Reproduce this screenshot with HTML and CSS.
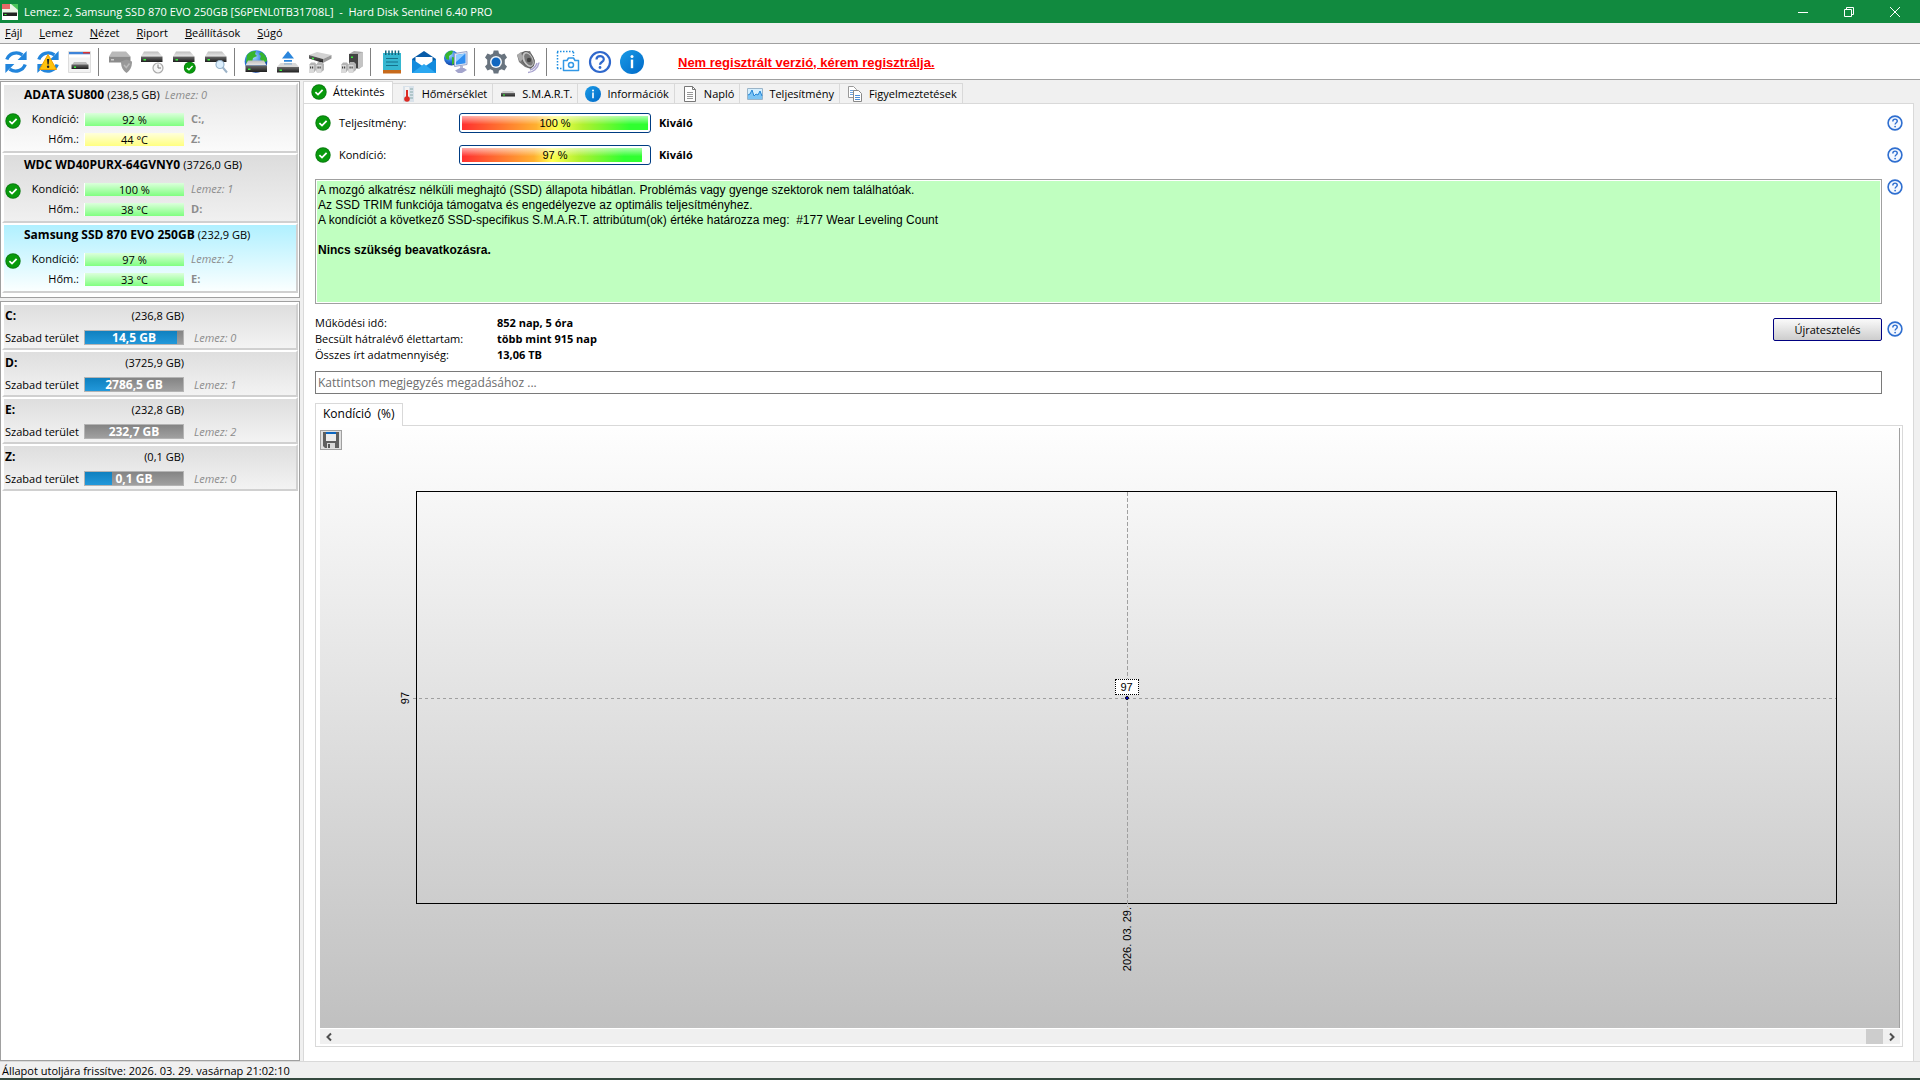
FILE: index.html
```html
<!DOCTYPE html>
<html lang="hu">
<head>
<meta charset="utf-8">
<title>Hard Disk Sentinel 6.40 PRO</title>
<link rel="stylesheet" href="styles.css">
</head>
<body>
<svg class="defs" aria-hidden="true">
  <defs>
    <linearGradient id="metal" x1="0" y1="0" x2="0" y2="1"><stop offset="0" stop-color="#bdbdbd"/><stop offset="1" stop-color="#e9e9e9"/></linearGradient>
    <linearGradient id="dark" x1="0" y1="0" x2="0" y2="1"><stop offset="0" stop-color="#6a6a6a"/><stop offset="1" stop-color="#1e1e1e"/></linearGradient>
    <linearGradient id="info" x1="0" y1="0" x2="1" y2="1"><stop offset="0" stop-color="#1a9be6"/><stop offset="1" stop-color="#0069c8"/></linearGradient>
    <radialGradient id="sea" cx="0.4" cy="0.3" r="0.8"><stop offset="0" stop-color="#a8dcff"/><stop offset="0.5" stop-color="#2a78dc"/><stop offset="1" stop-color="#0b2f8c"/></radialGradient>
  </defs>
  <symbol id="ok" viewBox="0 0 16 16"><circle cx="8" cy="8" r="7.7" fill="#0b7d12"/><circle cx="8" cy="8" r="6.8" fill="#089a0c"/><path d="M4.4 8.2 7 10.6 11.6 5.8" fill="none" stroke="#fff" stroke-width="1.8"/></symbol>
  <symbol id="help" viewBox="0 0 16 16"><circle cx="8" cy="8" r="6.9" fill="#f4f8ff" stroke="#2f6fd0" stroke-width="1.6"/><path d="M5.8 6.4C5.8 3.4 10.3 3.5 10.3 6.1 10.3 7.8 8.1 7.8 8.1 9.6" fill="none" stroke="#2f6fd0" stroke-width="1.4"/><circle cx="8.1" cy="11.6" r="0.9" fill="#2f6fd0"/></symbol>
  <symbol id="i" viewBox="0 0 24 24"><circle cx="12" cy="12" r="12" fill="url(#info)"/><circle cx="12" cy="6.6" r="1.5" fill="#fff"/><path d="M10.8 9.6h2.4v8.6h-2.4z" fill="#fff"/></symbol>
  <symbol id="cycle" viewBox="0 0 24 24"><path d="M2.800 9.500C5 3.400 12.500 .8 18.400 4.800" fill="none" stroke="#2285dc" stroke-width="3.400"/><path d="M22.600 .9v9h-9z" fill="#2285dc"/><path d="M21.200 14.500C19 20.600 11.500 23.200 5.600 19.200" fill="none" stroke="#2285dc" stroke-width="3.400"/><path d="M1.400 23.100v-9h9z" fill="#2285dc"/></symbol>
  <symbol id="drive" viewBox="0 0 24 24"><path d="M4 1.500h14l4.500 5H1z" fill="url(#metal)"/><path d="M1 6.500h21.500v5.500H1z" fill="url(#dark)"/><path d="M3.500 9h2.500v1.500H3.500z" fill="#39f03c"/></symbol>
  <symbol id="plugs" viewBox="0 0 24 24"><path d="M1 15l2-2.500h4l1.500 2L10 12h4l2 2v6l-3 2.500H9L8 20l-2 2.500H1z" fill="#b4b4b4"/><path d="M1 15h5v7.500H1zM8.500 15h5v7.500h-5z" fill="#dadada"/><path d="M2 16.500h1.200v2H2zM4 16.500h1.200v2H4zM9.500 16.500h1.200v2H9.500zM11.500 16.500h1.200v2h-1.200z" fill="#444"/></symbol>
</svg>

<header class="titlebar">
  <svg class="app-icon" viewBox="0 0 16 16"><path d="M0 0h16v16H0z" fill="#e9f5e5"/><path d="M0 0h8v5H0z" fill="#e54648" opacity=".8"/><path d="M9 0h7v6z" fill="#4cc45b"/><path d="M0 16v-6h16v6z" fill="#fff"/><path d="M1 8.500h14V12H1z" fill="#222"/><path d="M2.500 10h2v1h-2z" fill="#3f3"/></svg>
  <h1>Lemez: 2, Samsung SSD 870 EVO 250GB [S6PENL0TB31708L] &nbsp;-&nbsp; Hard Disk Sentinel 6.40 PRO</h1>
  <div class="window-buttons">
    <button type="button" aria-label="Kis méret"><svg viewBox="0 0 12 12"><path d="M1 6.500h10" /></svg></button>
    <button type="button" aria-label="Előző méret"><svg viewBox="0 0 12 12"><path d="M1.500 3.500h7v7h-7zM3.500 3.500v-2h7v7h-2"/></svg></button>
    <button type="button" aria-label="Bezárás"><svg viewBox="0 0 12 12"><path d="M1 1l10 10M11 1L1 11"/></svg></button>
  </div>
</header>

<nav class="menubar">
  <button type="button"><u>F</u>ájl</button>
  <button type="button"><u>L</u>emez</button>
  <button type="button"><u>N</u>ézet</button>
  <button type="button"><u>R</u>iport</button>
  <button type="button"><u>B</u>eállítások</button>
  <button type="button"><u>S</u>úgó</button>
</nav>

<div class="toolbar">
  <div class="tool-group">
    <button type="button" aria-label="Frissítés"><svg viewBox="0 0 24 24"><use href="#cycle"/></svg></button>
    <button type="button" aria-label="Riasztások frissítése"><svg viewBox="0 0 24 24"><use href="#cycle"/><path d="M12 4.500 20.500 19.500h-17z" fill="#ffc20e" stroke="#f0a000" stroke-linejoin="round"/><path d="M11 9h2.200l-.5 5.500h-1.200z" fill="#222"/><circle cx="12.100" cy="16.700" r="1.200" fill="#222"/></svg></button>
    <button type="button" aria-label="Lemez ablak"><svg viewBox="0 0 24 24"><path d="M.5 1.500h22v21H.5z" fill="#f2f2f2" stroke="#ddd"/><path d="M1 2h21v2.500H1z" fill="#3d83d8"/><path d="M15 2h7v1.500h-7z" fill="#d33"/><path d="M1 4.500h21v3H1z" fill="#fff"/><path d="M6 12h12l2 3H4z" fill="#bbb"/><path d="M3.500 14.500h17V19h-17z" fill="url(#dark)"/><path d="M6 16.500h2V18H6z" fill="#39f03c"/></svg></button>
  </div>
  <div class="tool-group">
    <button type="button" aria-label="Lemezvédelem"><svg viewBox="0 0 24 24"><path d="M4 1.500h14l4.500 5H1z" fill="#b9b9b9"/><path d="M1 6.500h21.500v6H1z" fill="#8b8b8b"/><path d="M3 9h3v1.500H3z" fill="#ccc"/><path d="M18.500 9.500 24 11.500c0 6-2 9-5.500 11.500-3.500-2.500-5.500-5.500-5.500-11.500z" fill="#999"/><path d="M16 15l2.300 2.500 3.200-4" fill="none" stroke="#bbb" stroke-width="1.500"/></svg></button>
    <button type="button" aria-label="Rövid teszt"><svg viewBox="0 0 24 24"><use href="#drive"/><circle cx="18" cy="18" r="5" fill="#f5f5f5" stroke="#aaa" stroke-width="1.200"/><path d="M18 14.500V18h3" fill="none" stroke="#777"/></svg></button>
    <button type="button" aria-label="Teszt"><svg viewBox="0 0 24 24"><use href="#drive"/><use href="#ok" x="11.500" y="11.500" width="12.500" height="12.500"/></svg></button>
    <button type="button" aria-label="Felületvizsgálat"><svg viewBox="0 0 24 24"><use href="#drive"/><circle cx="16" cy="14.500" r="4" fill="#dceffd" stroke="#98b4cc" stroke-width="1.200"/><path d="M18.800 17.500 23 22.500" stroke="#9cb3c8" stroke-width="2"/></svg></button>
  </div>
  <div class="tool-group">
    <button type="button" aria-label="Hálózati lemez"><svg viewBox="0 0 24 24"><circle cx="12" cy="11.500" r="11.300" fill="url(#sea)"/><path d="M3 5C6 1 10 1 12 1l-1 3 2 2-4 2-1 4-3-1-3 2zM17 2c4 2 6 6 6 9l-3 2-4-4 1-3-2-2z" fill="#36b52e"/><path d="M4 10.500h16l2.500 5h-21z" fill="url(#metal)"/><path d="M1.500 15.500h21.500v6.500H1.500z" fill="url(#dark)"/><path d="M4 18.500h2.500V20H4z" fill="#39f03c"/></svg></button>
    <button type="button" aria-label="Eszköz kiadása"><svg viewBox="0 0 24 24"><path d="M12 1 18 8.500H6zM8 10h8v1.800H8zM8 13h8v1.800H8z" fill="#2b86dc"/><path d="M4.500 13h15l3.500 4H1z" fill="#ccc" opacity=".75"/><path d="M1 17h22v5.500H1z" fill="url(#dark)"/><path d="M3.500 19.500H6V21H3.500z" fill="#39f03c"/></svg></button>
    <button type="button" aria-label="Kábelek"><svg viewBox="0 0 24 24"><path d="M1 5 9 2l14.500 3L15 9z" fill="#d2d2d2"/><path d="M1 5l14 4v4L1 8.500z" fill="url(#dark)"/><path d="M15 9l8.500-4v3.500L15 13z" fill="#999"/><path d="M4 7.500l2 .6V9.500l-2-.6z" fill="#39f03c"/><use href="#plugs"/></svg></button>
    <button type="button" aria-label="Tápellátás"><svg viewBox="0 0 24 24"><path d="M9 4l5-3 9 1v14l-4 3H9z" fill="#aaa"/><path d="M9 4h9v14H9z" fill="#444"/><path d="M18 4l5-2v14l-5 3z" fill="#c4c4c4"/><path d="M11 6.500h2V8h-2z" fill="#39f03c"/><use href="#plugs"/></svg></button>
  </div>
  <div class="tool-group">
    <button type="button" aria-label="Jelentés"><svg viewBox="0 0 24 24"><path d="M3 3h18v17H3z" fill="#35b7d0"/><path d="M3 20h18v3.500H3z" fill="#c66a1c"/><path d="M5 .5h1.500V5H5zM8.200 .5h1.500V5H8.200zM11.400 .5h1.500V5h-1.500zM14.600 .5h1.500V5h-1.500zM17.800 .5h1.500V5h-1.500z" fill="#12667e"/><path d="M6 8.500h12M6 12h12M6 15.500h12" stroke="#15718a" stroke-width="1.200"/></svg></button>
    <button type="button" aria-label="E-mail küldése"><svg viewBox="0 0 24 24"><path d="M0 9 12 1l12 8v14H0z" fill="#075ba8"/><path d="M3.500 7h17v10h-17z" fill="#fff"/><path d="M0 9l12 8 12-8v14H0z" fill="#128bdd"/><path d="M0 23l12-9 12 9z" fill="#2ba7f0"/></svg></button>
    <button type="button" aria-label="Hálózat"><svg viewBox="0 0 24 24"><circle cx="7.500" cy="8" r="7.500" fill="url(#sea)"/><path d="M1 5c2-3 5-5 8-4L8 4 5 6 5 10l-3-1zM8 7l4 1-1 5-3 2z" fill="#36b52e"/><path d="M10.500 3.500 23 1.500v13l-12.500 2z" fill="#e0e6f4" stroke="#9aa4c8"/><path d="M12 5l9.500-1.600v9.800L12 14.800z" fill="#2f8ef0"/><path d="M12 5l9.500-1.600L12 12z" fill="#8ecbff"/><path d="M16 16h3v3h-3z" fill="#b6b8d4"/><path d="M11 20.500l5-2.500h4l3 2-5 3h-4z" fill="#a3a4cc"/></svg></button>
  </div>
  <div class="tool-group">
    <button type="button" aria-label="Beállítások"><svg viewBox="0 0 24 24"><path d="M9.700 0.500h4.600l.7 3 2.500 1.300 3-1.200 2.500 4-2.200 2.200v4.400l2.200 2.200-2.500 4-3-1.200-2.500 1.300-.7 3H9.700l-.7-3-2.500-1.300-3 1.200-2.500-4 2.200-2.200V9.800L1 7.600l2.500-4 3 1.200L9 3.500z" fill="#68737e"/><circle cx="12" cy="12" r="6" fill="#f4f8fc"/><circle cx="12" cy="12" r="4.500" fill="#1167c0"/></svg></button>
    <button type="button" aria-label="Hangjelzés"><svg viewBox="0 0 24 24"><path d="M12 22.500c5 0 10-4 11-10M14 20c4-1 6-4 7-7" fill="none" stroke="#a9a4cf" stroke-width="1.500"/><path d="M1 5l5-3 8-1 5 10-4 8-6-2-6-5z" fill="#777"/><ellipse cx="12" cy="9.500" rx="5.500" ry="8.500" transform="rotate(-28 12 9.500)" fill="#c4c4c4" stroke="#606060"/><ellipse cx="12.500" cy="9.500" rx="3.500" ry="6.500" transform="rotate(-28 12.500 9.500)" fill="#777"/><circle cx="13" cy="10" r="2.200" fill="#444"/><path d="M1 5l4-3 2 7-3 3z" fill="#aaa"/></svg></button>
  </div>
  <div class="tool-group">
    <button type="button" aria-label="Képernyőkép"><svg viewBox="0 0 24 24"><path d="M1 1.500h17M1.500 2v17M17.500 2v4M1 18.500h5" fill="none" stroke="#1d8de0" stroke-width="1.500" stroke-dasharray="1.500 1.500"/><path d="M7.500 10.500h3.500l1.500-2.500h5l1.500 2.500h3.500v10h-15z" fill="#fff" stroke="#3298e6" stroke-width="1.500" stroke-linejoin="round"/><circle cx="15" cy="15" r="2.500" fill="none" stroke="#3298e6" stroke-width="1.500"/></svg></button>
    <button type="button" aria-label="Súgó"><svg viewBox="0 0 24 24"><circle cx="12" cy="12" r="10" fill="#fff" stroke="#2f68cc" stroke-width="2.200"/><path d="M8.500 9.500C8.500 5 15.800 5 15.800 9.200 15.800 12 12 12 12 14.800" fill="none" stroke="#2f68cc" stroke-width="2.200"/><circle cx="12" cy="17.500" r="1.400" fill="#2f68cc"/></svg></button>
    <button type="button" aria-label="Névjegy"><svg viewBox="0 0 24 24"><use href="#i"/></svg></button>
  </div>
  <a class="register" href="#">Nem regisztrált verzió, kérem regisztrálja.</a>
</div>

<div class="workspace">
  <aside class="sidebar">
    <section class="panel disks">
      <article class="disk">
        <h2>ADATA SU800 <span>(238,5 GB)</span> <i>Lemez: 0</i></h2>
        <svg class="state"><use href="#ok"/></svg>
        <span class="name">Kondíció:</span><span class="level">92 %</span><b>C:,</b>
        <span class="name">Hőm.:</span><span class="level warm">44 °C</span><b>Z:</b>
      </article>
      <article class="disk shaded">
        <h2>WDC WD40PURX-64GVNY0 <span>(3726,0 GB)</span></h2>
        <svg class="state"><use href="#ok"/></svg>
        <span class="name">Kondíció:</span><span class="level">100 %</span><i>Lemez: 1</i>
        <span class="name">Hőm.:</span><span class="level">38 °C</span><b>D:</b>
      </article>
      <article class="disk selected">
        <h2>Samsung SSD 870 EVO 250GB <span>(232,9 GB)</span></h2>
        <svg class="state"><use href="#ok"/></svg>
        <span class="name">Kondíció:</span><span class="level">97 %</span><i>Lemez: 2</i>
        <span class="name">Hőm.:</span><span class="level">33 °C</span><b>E:</b>
      </article>
    </section>
    <section class="panel volumes">
      <article class="volume">
        <h2>C:</h2><span class="size">(236,8 GB)</span>
        <span class="name">Szabad terület</span>
        <div class="usage"><div class="used" style="width:94%"></div><span>14,5 GB</span></div><i>Lemez: 0</i>
      </article>
      <article class="volume">
        <h2>D:</h2><span class="size">(3725,9 GB)</span>
        <span class="name">Szabad terület</span>
        <div class="usage"><div class="used" style="width:25%"></div><span>2786,5 GB</span></div><i>Lemez: 1</i>
      </article>
      <article class="volume">
        <h2>E:</h2><span class="size">(232,8 GB)</span>
        <span class="name">Szabad terület</span>
        <div class="usage"><div class="used" style="width:0%"></div><span>232,7 GB</span></div><i>Lemez: 2</i>
      </article>
      <article class="volume">
        <h2>Z:</h2><span class="size">(0,1 GB)</span>
        <span class="name">Szabad terület</span>
        <div class="usage"><div class="used" style="width:28%"></div><span>0,1 GB</span></div><i>Lemez: 0</i>
      </article>
    </section>
  </aside>

  <main class="main">
    <div class="tabs" role="tablist">
      <button type="button" role="tab" aria-selected="true" class="tab active"><svg><use href="#ok"/></svg>Áttekintés</button>
      <button type="button" role="tab" class="tab"><svg viewBox="0 0 16 16"><path d="M3 0h11v16H3z" fill="#d9e2ea"/><path d="M10 3h3M10 6h3M10 9h3M10 12h3" stroke="#8aa"/><path d="M5 1h4v14H5z" fill="#f3f3f3"/><path d="M6 4h2v9H6z" fill="#dc2b24"/><circle cx="7" cy="13" r="2.800" fill="#dc2b24"/></svg>Hőmérséklet</button>
      <button type="button" role="tab" class="tab"><svg viewBox="0 0 16 16"><path d="M3 5h10l2 2H1z" fill="#ccc"/><path d="M1 7h14v3.500H1z" fill="url(#dark)"/><path d="M3 8.500h2v1H3z" fill="#3f3"/></svg>S.M.A.R.T.</button>
      <button type="button" role="tab" class="tab"><svg viewBox="0 0 24 24"><use href="#i"/></svg>Információk</button>
      <button type="button" role="tab" class="tab"><svg viewBox="0 0 16 16"><path d="M2.500 .5h8l3 3v12h-11z" fill="#fff" stroke="#777"/><path d="M10.500 .5v3h3" fill="none" stroke="#777"/><path d="M5 6.500h6M5 8.500h6M5 10.500h6M5 12.500h6" stroke="#999"/></svg>Napló</button>
      <button type="button" role="tab" class="tab"><svg viewBox="0 0 16 16"><path d="M.5 2.500h15v11H.5z" fill="#d4efff" stroke="#9ab4c8"/><path d="M1 13v-4l2-1 2-4 2 6 2-2 2 1 2-4 2 5v3z" fill="#7cc4f4"/><path d="M1 9l2-1 2-4 2 6 2-2 2 1 2-4 2 5" fill="none" stroke="#2586d6"/></svg>Teljesítmény</button>
      <button type="button" role="tab" class="tab"><svg viewBox="0 0 16 16"><path d="M1.500 .5h5l3 3v8h-8z" fill="#fff" stroke="#999"/><path d="M3 4.500h4M3 6.500h4M3 8.500h4" stroke="#6da4e0"/><path d="M6.500 4.500h5l3 3v8h-8z" fill="#fff" stroke="#888"/><path d="M8 9.500h5M8 11.500h5M8 13.500h5" stroke="#4d8fd8"/></svg>Figyelmeztetések</button>
    </div>

    <div class="page">
      <div class="rating"><svg><use href="#ok"/></svg><span>Teljesítmény:</span><div class="meter"><div class="fill" style="width:100%"></div><span>100 %</span></div><strong>Kiváló</strong></div>
      <button type="button" class="help" aria-label="Súgó: teljesítmény"><svg><use href="#help"/></svg></button>
      <div class="rating"><svg><use href="#ok"/></svg><span>Kondíció:</span><div class="meter"><div class="fill" style="width:97%"></div><span>97 %</span></div><strong>Kiváló</strong></div>
      <button type="button" class="help" aria-label="Súgó: kondíció"><svg><use href="#help"/></svg></button>

      <div class="report">
        <p>A mozgó alkatrész nélküli meghajtó (SSD) állapota hibátlan. Problémás vagy gyenge szektorok nem találhatóak.<br>Az SSD TRIM funkciója támogatva és engedélyezve az optimális teljesítményhez.<br>A kondíciót a következő SSD-specifikus S.M.A.R.T. attribútum(ok) értéke határozza meg: &nbsp;#177 Wear Leveling Count</p>
        <p><strong>Nincs szükség beavatkozásra.</strong></p>
      </div>
      <button type="button" class="help" aria-label="Súgó: állapot"><svg><use href="#help"/></svg></button>

      <div class="summary">
        <dl>
          <dt>Működési idő:</dt><dd>852 nap, 5 óra</dd>
          <dt>Becsült hátralévő élettartam:</dt><dd>több mint 915 nap</dd>
          <dt>Összes írt adatmennyiség:</dt><dd>13,06 TB</dd>
        </dl>
        <button type="button" class="retest">Újratesztelés</button>
      </div>
      <button type="button" class="help low" aria-label="Súgó: újratesztelés"><svg><use href="#help"/></svg></button>

      <input class="comment" type="text" aria-label="Megjegyzés" placeholder="Kattintson megjegyzés megadásához ...">

      <section class="history">
        <button type="button" class="history-tab">Kondíció &nbsp;(%)</button>
        <div class="history-box">
          <div class="chart">
            <button type="button" class="save" aria-label="Mentés"><svg viewBox="0 0 16 16"><path d="M0 0h16v16H2l-2-2z" fill="#5f5f5f"/><path d="M3 0h10v9H3z" fill="#ececec"/><path d="M3 0h10v2H3z" fill="#0a66c2"/><path d="M4 11h8v5H4z" fill="#d8d8d8"/><path d="M5 12h2v4H5z" fill="#555"/></svg></button>
            <div class="plot">
              <div class="grid-h"></div>
              <div class="grid-v"></div>
              <span class="tick-y">97</span>
              <span class="tick-x">2026. 03. 29.</span>
              <span class="point-label">97</span>
              <span class="point"></span>
            </div>
          </div>
          <div class="scrollbar">
            <button type="button" aria-label="Balra"><svg viewBox="0 0 10 10"><path d="M7 1.500 3.500 5 7 8.500"/></svg></button>
            <div class="thumb"></div>
            <button type="button" aria-label="Jobbra"><svg viewBox="0 0 10 10"><path d="M3 1.500 6.500 5 3 8.500"/></svg></button>
          </div>
        </div>
      </section>
    </div>
  </main>
</div>

<footer class="statusbar">Állapot utoljára frissítve: 2026. 03. 29. vasárnap 21:02:10</footer>
</body>
</html>
```

FILE: styles.css
```css
* { box-sizing: border-box; }

body {
  margin: 0;
  min-height: 100vh;
  display: flex;
  flex-direction: column;
  background: #f0f0f0;
  color: #000;
  font: 11px/16px "Open Sans", "Noto Sans", sans-serif;
}

button {
  padding: 0;
  border: 0;
  background: none;
  color: inherit;
  font: inherit;
}

h1, h2, p, dl, dd { margin: 0; font-size: inherit; }
svg { display: block; flex: none; }
.defs { position: absolute; width: 0; height: 0; }

/* Title bar */
.titlebar {
  display: flex;
  align-items: center;
  gap: 6px;
  height: 23px;
  padding-left: 2px;
  background: #118a3f;
  color: #fff;
}
.titlebar h1 { flex: 1; font-weight: 400; }
.app-icon { width: 16px; height: 16px; }
.window-buttons { display: flex; padding-right: 2px; }
.window-buttons button {
  display: grid;
  place-items: center;
  width: 46px;
  height: 20px;
}
.window-buttons svg { width: 12px; height: 12px; fill: none; stroke: #fff; }

/* Menu bar */
.menubar {
  display: flex;
  gap: 17px;
  height: 20px;
  padding-left: 5px;
}

/* Toolbar */
.toolbar {
  display: flex;
  align-items: center;
  height: 37px;
  border-top: 1px solid #a0a0a0;
  border-bottom: 1px solid #a0a0a0;
  background: #fff;
}
.tool-group { display: flex; }
.tool-group + .tool-group { padding-left: 8px; background: linear-gradient(#808080, #808080) 2px 0 / 1px 28px no-repeat; }
.tool-group button {
  display: grid;
  place-items: center;
  width: 32px;
  height: 28px;
}
.tool-group svg { width: 24px; height: 24px; }
.register {
  margin-left: 30px;
  padding-top: 3px;
  color: #f00;
  font: bold 13px/16px "Liberation Sans", Arial, sans-serif;
}

/* Work area */
.workspace {
  flex: 1;
  display: flex;
  gap: 3px;
  padding-top: 1px;
  border-bottom: 1px solid #d9d9d9;
}
.sidebar {
  display: flex;
  flex-direction: column;
  gap: 3px;
  width: 300px;
}
.panel {
  padding: 1px;
  border: 1px solid #a0a0a0;
  background: #fff;
}
.disks { padding-bottom: 4px; }
.volumes { flex: 1; }
.sidebar h2 { font-size: 12px; font-weight: 700; white-space: nowrap; }
.sidebar h2 span, .sidebar h2 i { font-size: 11px; font-weight: 400; }
.sidebar i { color: #8c8c8c; }
.sidebar b { color: #8c8c8c; }

.disk, .volume {
  display: grid;
  border: 2px solid;
  border-color: #fff #d0d0d0 #d0d0d0 #fff;
  background: linear-gradient(#e6e6e6, #fbfbfb);
}
.disk {
  grid-template-columns: 16px 63px 100px 1fr;
  grid-template-rows: 24px 20px 20px;
  align-items: center;
  height: 70px;
  padding-left: 1px;
}
.disk.shaded { background: linear-gradient(#dcdcdc, #f0f0f0); }
.disk.selected { background: linear-gradient(#b0f0ff, #fbffff); }
.disk h2 { grid-column: 1 / -1; padding: 0 0 4px 19px; }
.state { grid-row: 2 / 4; grid-column: 1; width: 16px; height: 16px; align-self: start; margin-top: 4px; }
.disk .name { grid-column: 2; padding-right: 5px; text-align: right; }
.level {
  height: 13px;
  line-height: 13px;
  border-left: 1px solid #fff;
  background: linear-gradient(#dcffdc, #80ff80);
  text-align: center;
}
.level.warm { background: linear-gradient(#ffffdc, #ffff80); }
.disk i, .disk b { padding-left: 7px; }
.disk h2 i { padding-left: 2px; }

.volume {
  grid-template-columns: 79px 100px 1fr;
  grid-template-rows: 22px 21px;
  align-items: center;
  height: 47px;
  padding-left: 1px;
  background: linear-gradient(#dedede, #f3f3f3);
}
.volume .size { text-align: right; }
.volume .name { grid-column: 1; white-space: nowrap; }
.usage {
  display: grid;
  height: 15px;
  border: 1px solid #b4b4b4;
  background: linear-gradient(#848484, #a0a0a0);
}
.usage > * { grid-area: 1 / 1; }
.usage .used { background: linear-gradient(#0f80bf, #2298da); }
.usage span { color: #fff; font-size: 12px; font-weight: 700; line-height: 13px; text-align: center; }
.volume i { padding-left: 10px; }

/* Main tabs */
.main {
  flex: 1;
  display: flex;
  flex-direction: column;
  padding-right: 6px;
}
.tabs { display: flex; align-items: flex-end; height: 22px; }
.tab {
  display: flex;
  align-items: center;
  gap: 6px;
  height: 20px;
  padding: 0 5px 0 7px;
  border: 1px solid #d9d9d9;
  border-width: 1px 1px 0 0;
  background: #f2f2f2;
}
.tab svg { width: 16px; height: 16px; }
.tab.active {
  height: 23px;
  margin-bottom: -1px;
  padding: 0 7px 2px;
  border-left-width: 1px;
  background: #fff;
}
.page {
  flex: 1;
  display: grid;
  grid-template-columns: 1fr 16px;
  grid-template-rows: repeat(5, auto) 1fr;
  column-gap: 5px;
  padding: 9px 10px 14px 11px;
  border: 1px solid #d9d9d9;
  border-bottom: 0;
  background: #fff;
}
.help { align-self: start; height: 20px; }
.help svg { width: 16px; height: 16px; }

.rating {
  display: grid;
  grid-template-columns: 16px 112px 192px 1fr;
  column-gap: 8px;
  align-items: center;
  height: 20px;
  margin-bottom: 12px;
}
.rating > svg { width: 16px; height: 16px; }
.meter {
  display: grid;
  height: 20px;
  padding: 2px;
  border: 1px solid #003c82;
  border-radius: 3px;
}
.meter > * { grid-area: 1 / 1; }
.fill {
  background:
    linear-gradient(rgba(255, 255, 255, 0.6), rgba(255, 255, 255, 0.3) 30%, transparent 60%),
    linear-gradient(90deg, #ff3030, #ffb030 40%, #ffff50 50%, #b0f030 65%, #30ff30 90%);
}
.meter span { font: 11px/14px "Liberation Sans", Arial, sans-serif; text-align: center; }

.report {
  height: 125px;
  margin-top: 2px;
  padding: 3px 2px;
  border: 1px solid #a0a0a0;
  outline: 1px solid #fff;
  outline-offset: -2px;
  background: #c0ffc0;
  font: 12px/15px "Liberation Sans", Arial, sans-serif;
}
.report p + p { margin-top: 15px; }

.summary {
  display: flex;
  justify-content: space-between;
  align-items: flex-start;
  margin-top: 11px;
}
.summary dl { display: grid; grid-template-columns: 182px auto; }
.summary dd { font-weight: 700; }
.retest {
  width: 109px;
  height: 23px;
  margin-top: 3px;
  border: 1px solid #000080;
  border-radius: 2px;
  background: linear-gradient(#fafafa, #cdcdcd);
}
.help.low { margin-top: 15px; }
.comment {
  height: 23px;
  margin-top: 8px;
  padding: 0 2px;
  border: 1px solid #7a7a7a;
  background: #fff;
  font: inherit;
  font-size: 12px;
}
.comment::placeholder { color: #6d6d6d; }

/* History chart */
.history {
  grid-column: 1 / -1;
  display: flex;
  flex-direction: column;
  align-items: flex-start;
  margin-top: 9px;
}
.history-tab {
  z-index: 1;
  height: 23px;
  margin-bottom: -1px;
  padding: 0 7px 2px;
  border: 1px solid #d9d9d9;
  border-bottom: 0;
  background: #fff;
  font-size: 12px;
}
.history-box {
  flex: 1;
  align-self: stretch;
  display: flex;
  flex-direction: column;
  padding: 2px 2px 2px 4px;
  border: 1px solid #d9d9d9;
}
.chart {
  flex: 1;
  display: flex;
  flex-direction: column;
  align-items: flex-start;
  padding: 2px 62px 124px 0;
  border-right: 1px solid #a0a0a0;
  background: linear-gradient(#fefefe, #c0c0c0);
}
.save {
  display: grid;
  place-items: center;
  width: 22px;
  height: 20px;
  border: 1px solid #a0a0a0;
  background: #e0e0e0;
}
.save svg { width: 16px; height: 16px; }
.plot {
  position: relative;
  flex: 1;
  align-self: stretch;
  margin: 41px 0 0 96px;
  border: 1px solid #000;
}
.grid-h, .grid-v { position: absolute; color: #a0a0a0; }
.grid-h {
  top: 50%;
  left: -4px;
  right: 0;
  height: 1px;
  background: repeating-linear-gradient(90deg, currentColor 0 3px, transparent 3px 6px);
}
.grid-v {
  left: 50%;
  top: 0;
  bottom: -4px;
  width: 1px;
  background: repeating-linear-gradient(currentColor 0 4px, transparent 4px 6px);
}
.tick-y, .tick-x, .point-label { font: 11px/14px "Liberation Sans", Arial, sans-serif; }
.tick-y, .tick-x { position: absolute; writing-mode: vertical-rl; }
.tick-y { top: 50%; left: -12px; transform: translate(-50%, -50%) rotate(180deg); }
.tick-x { top: 100%; left: 50%; margin-top: 4px; transform: translateX(-50%) rotate(180deg); white-space: nowrap; }
.point-label {
  position: absolute;
  left: 50%;
  bottom: 50%;
  width: 24px;
  margin-bottom: 3px;
  border: 1px dotted #000;
  background: #fff;
  text-align: center;
  transform: translateX(-50%);
}
.point {
  position: absolute;
  left: 50%;
  top: 50%;
  width: 4px;
  height: 4px;
  border: 1px solid #000;
  border-radius: 50%;
  background: #00f;
  transform: translate(-50%, -50%);
}

.scrollbar {
  display: flex;
  height: 15px;
  margin-top: 1px;
  background: #f0f0f0;
}
.scrollbar button { display: grid; place-items: center; width: 17px; }
.scrollbar svg { width: 10px; height: 10px; fill: none; stroke: #505050; stroke-width: 2; }
.thumb { width: 17px; margin-left: auto; background: #cdcdcd; }

.statusbar {
  height: 18px;
  padding-left: 2px;
  border-bottom: 2px solid #35493f;
  line-height: 18px;
  white-space: nowrap;
}
```
